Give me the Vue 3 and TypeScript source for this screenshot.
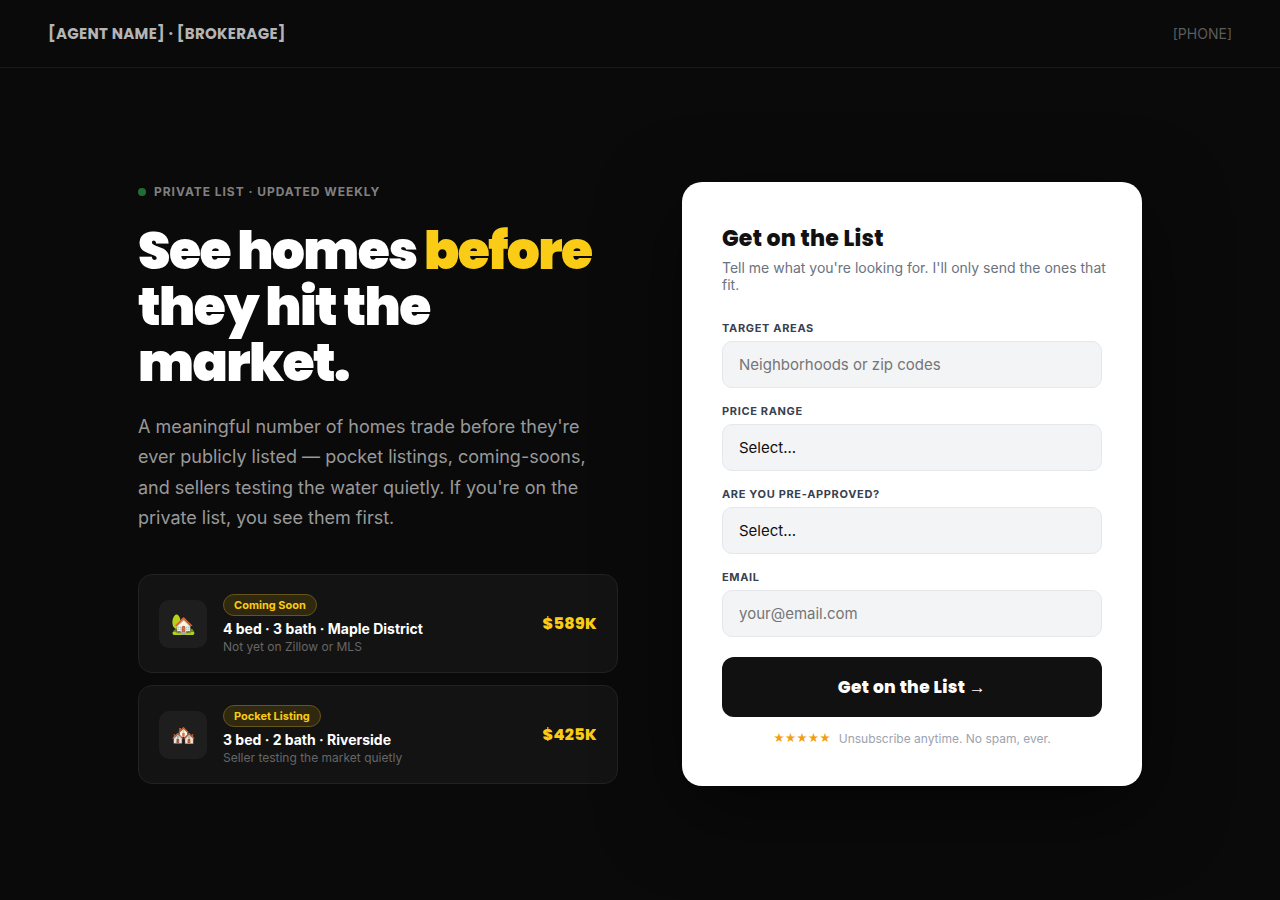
<script setup lang="ts">
import { ref } from 'vue'

interface Listing {
  icon: string
  tag: string
  title: string
  note: string
  price: string
}

const listings: Listing[] = [
  { icon: '🏡', tag: 'Coming Soon', title: '4 bed · 3 bath · Maple District', note: 'Not yet on Zillow or MLS', price: '$589K' },
  { icon: '🏘️', tag: 'Pocket Listing', title: '3 bed · 2 bath · Riverside', note: 'Seller testing the market quietly', price: '$425K' },
]

const areas = ref('')
const price = ref('')
const approved = ref('')
const email = ref('')
</script>

<template>
  <div class="page">
    <header class="nav">
      <div class="brand">[AGENT NAME] · [BROKERAGE]</div>
      <a class="phone" href="#">[PHONE]</a>
    </header>
    <main class="hero">
      <div class="inner">
        <section class="pitch">
          <div class="eyebrow"><span class="dot"></span>PRIVATE LIST · UPDATED WEEKLY</div>
          <h1>See homes <em>before</em> they hit the market.</h1>
          <p class="lead">A meaningful number of homes trade before they're ever publicly listed — pocket listings, coming-soons, and sellers testing the water quietly. If you're on the private list, you see them first.</p>
          <div class="listings">
            <article v-for="item in listings" :key="item.title" class="listing">
              <div class="thumb">{{ item.icon }}</div>
              <div class="info">
                <span class="tag">{{ item.tag }}</span>
                <div class="title">{{ item.title }}</div>
                <div class="note">{{ item.note }}</div>
              </div>
              <div class="price">{{ item.price }}</div>
            </article>
          </div>
        </section>
        <form class="card" @submit.prevent>
          <h2>Get on the List</h2>
          <p class="sub">Tell me what you're looking for. I'll only send the ones that<br />fit.</p>
          <div class="field">
            <label for="areas">TARGET AREAS</label>
            <input id="areas" v-model="areas" type="text" placeholder="Neighborhoods or zip codes" />
          </div>
          <div class="field">
            <label for="price">PRICE RANGE</label>
            <select id="price" v-model="price">
              <option value="">Select...</option>
            </select>
          </div>
          <div class="field">
            <label for="approved">ARE YOU PRE-APPROVED?</label>
            <select id="approved" v-model="approved">
              <option value="">Select...</option>
            </select>
          </div>
          <div class="field">
            <label for="email">EMAIL</label>
            <input id="email" v-model="email" type="email" placeholder="your@email.com" />
          </div>
          <button type="submit">Get on the List →</button>
          <div class="foot"><span class="stars">★★★★★</span><span>Unsubscribe anytime. No spam, ever.</span></div>
        </form>
      </div>
    </main>
  </div>
</template>

<style>
body {
  background: #0a0a0a;
}
</style>

<style scoped>
.page,
.page * {
  box-sizing: border-box;
}
.page {
  min-height: 100vh;
  display: flex;
  flex-direction: column;
  background: #0a0a0a;
  color: #fff;
  font-family: Inter, "Liberation Sans", sans-serif;
}
.nav {
  display: flex;
  align-items: center;
  justify-content: space-between;
  padding: 22px 48px;
  border-bottom: 1px solid #1a1a1a;
}
.brand {
  font: 700 15px/23px Poppins, sans-serif;
  letter-spacing: 0.02em;
  color: #b5b5b5;
}
.phone {
  font-size: 14px;
  color: #5c5c5c;
  text-decoration: none;
}
.hero {
  flex: 1;
  display: flex;
  align-items: center;
  justify-content: center;
  padding: 80px 48px;
}
.inner {
  width: 100%;
  max-width: 1004px;
  display: grid;
  grid-template-columns: minmax(0, 1fr) 460px;
  gap: 64px;
  align-items: center;
}
.eyebrow {
  display: flex;
  align-items: center;
  gap: 8px;
  margin-bottom: 24px;
  font-size: 12px;
  line-height: 15px;
  font-weight: 700;
  letter-spacing: 0.08em;
  color: #808080;
}
.dot {
  width: 8px;
  height: 8px;
  border-radius: 50%;
  background: #226c38;
}
h1 {
  margin: 0 0 20px;
  font: 900 52px/1.08 Poppins, sans-serif;
  letter-spacing: -0.03em;
}
h1 em {
  font-style: normal;
  color: #facc15;
}
.lead {
  margin: 0 0 40px;
  font-size: 18px;
  line-height: 1.7;
  color: #999;
}
.listings {
  display: flex;
  flex-direction: column;
  gap: 12px;
}
.listing {
  display: flex;
  align-items: center;
  gap: 16px;
  padding: 19px 20px 18px;
  border: 1px solid #222;
  border-radius: 14px;
  background: #131313;
}
.thumb {
  width: 48px;
  height: 48px;
  display: grid;
  place-items: center;
  border-radius: 10px;
  background: #1e1e1e;
  font-size: 20px;
}
.info {
  flex: 1;
  display: flex;
  flex-direction: column;
  align-items: flex-start;
}
.tag {
  padding: 3px 10px;
  margin-bottom: 4px;
  border: 1px solid #65551a;
  border-radius: 20px;
  background: #30290f;
  font-size: 11px;
  line-height: 14px;
  font-weight: 700;
  color: #facc15;
}
.title {
  margin-bottom: 1px;
  font-size: 14px;
  line-height: 18px;
  font-weight: 700;
}
.note {
  font-size: 12px;
  line-height: 15px;
  color: #666;
}
.price {
  font: 800 16px/24px Poppins, sans-serif;
  letter-spacing: 0.02em;
  color: #facc15;
}
.card {
  padding: 40px;
  border-radius: 20px;
  background: #fff;
  color: #111;
  box-shadow: 0 24px 80px rgba(0, 0, 0, 0.5);
}
h2 {
  margin: 0 0 4px;
  font: 800 22px/33px Poppins, sans-serif;
  letter-spacing: 0.01em;
}
.sub {
  margin: 0 0 28px;
  font-size: 14px;
  line-height: 17px;
  white-space: nowrap;
  color: #6b7280;
}
.field {
  margin-bottom: 16px;
}
label {
  display: block;
  margin-bottom: 6px;
  font-size: 11px;
  line-height: 14px;
  font-weight: 700;
  letter-spacing: 0.06em;
  color: #374151;
}
input,
select {
  display: block;
  width: 100%;
  height: 47px;
  padding: 0 16px;
  border: 1px solid #e5e7eb;
  border-radius: 10px;
  background: #f3f4f6;
  font: 400 15px Inter, sans-serif;
  color: #111;
  appearance: none;
}
input::placeholder {
  color: #757575;
}
button {
  display: block;
  width: 100%;
  height: 60px;
  margin-top: 20px;
  border: 0;
  border-radius: 12px;
  background: #111;
  font: 800 17px Poppins, sans-serif;
  letter-spacing: 0.02em;
  color: #fff;
}
.foot {
  display: flex;
  align-items: center;
  justify-content: center;
  gap: 8px;
  margin-top: 14px;
  font-size: 12px;
  line-height: 15px;
  color: #9ca3af;
}
.stars {
  font-size: 11px;
  color: #f59e0b;
}
</style>
